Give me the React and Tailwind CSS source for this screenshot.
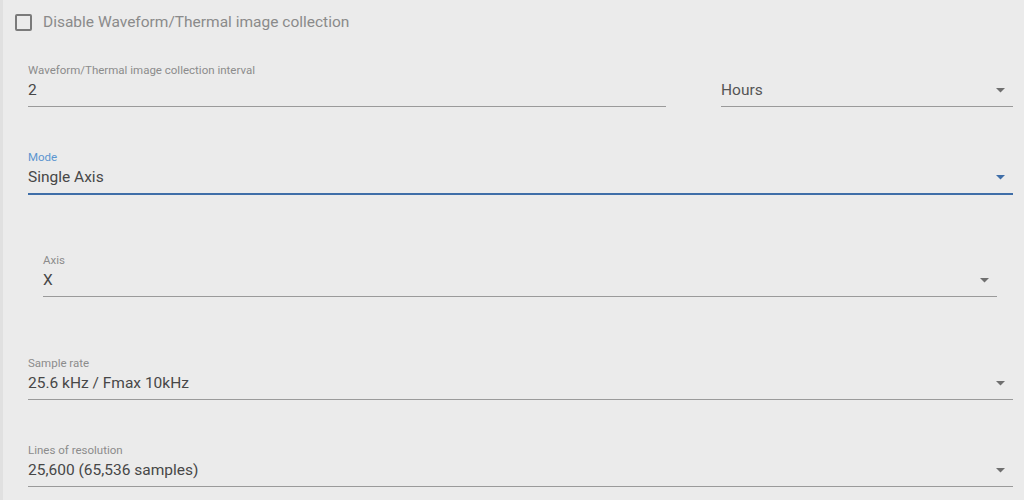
import React from "react";

function Arrow({ blue }) {
  return (
    <svg width="9" height="5" viewBox="0 0 9 5" className="shrink-0">
      <path d="M0 0 L9 0 L4.5 4.5 Z" fill={blue ? "#3f6ea8" : "#6f6f6f"} />
    </svg>
  );
}

function Field({ label, value, select, focused, className = "" }) {
  return (
    <div
      className={
        "flex flex-col " +
        (focused ? "border-b-2 border-[#3f6ea8] " : "border-b border-[#9a9a9a] ") +
        className
      }
    >
      <div
        className={
          "h-[14px] text-[11.5px] leading-[14px] " +
          (focused ? "text-[#5b95d0]" : "text-[#8c8c8c]")
        }
      >
        {label}
      </div>
      <div className="mt-[3px] flex h-[20px] items-center justify-between pr-[8px]">
        <span className="text-[15.5px] leading-[20px] text-[#474747]">{value}</span>
        {select && <Arrow blue={focused} />}
      </div>
      <div className="h-[6px]" />
    </div>
  );
}

export default function App() {
  return (
    <div
      className="flex h-[500px] w-[1024px] overflow-hidden bg-[#ebebeb]"
      style={{ fontFamily: "Roboto, 'Liberation Sans', sans-serif" }}
    >
      <div className="h-full w-[3px] bg-[#e0e0e0]" />
      <div className="flex flex-1 flex-col pl-[25px] pr-[11px]">
        <div className="mt-[14px] -ml-[13px] flex items-center gap-[11px]">
          <div className="h-[17px] w-[17px] rounded-[2px] border-2 border-[#7a7a7a]" />
          <span className="text-[15.5px] leading-[17px] text-[#8a8a8a]">
            Disable Waveform/Thermal image collection
          </span>
        </div>

        <div className="mt-[32px] flex gap-[55px]">
          <Field
            className="w-[638px]"
            label="Waveform/Thermal image collection interval"
            value="2"
          />
          <div className="flex flex-1 flex-col border-b border-[#9a9a9a]">
            <div className="h-[14px]" />
            <div className="mt-[3px] flex h-[20px] items-center justify-between pr-[8px]">
              <span className="text-[15.5px] leading-[20px] text-[#555555]">Hours</span>
              <Arrow />
            </div>
            <div className="h-[6px]" />
          </div>
        </div>

        <Field className="mt-[43px]" label="Mode" value="Single Axis" select focused />

        <div className="mt-[58px] pl-[15px] pr-[16px]">
          <Field label="Axis" value="X" select />
        </div>

        <Field className="mt-[59px]" label="Sample rate" value="25.6 kHz / Fmax 10kHz" select />

        <Field
          className="mt-[43px]"
          label="Lines of resolution"
          value="25,600 (65,536 samples)"
          select
        />
      </div>
    </div>
  );
}
